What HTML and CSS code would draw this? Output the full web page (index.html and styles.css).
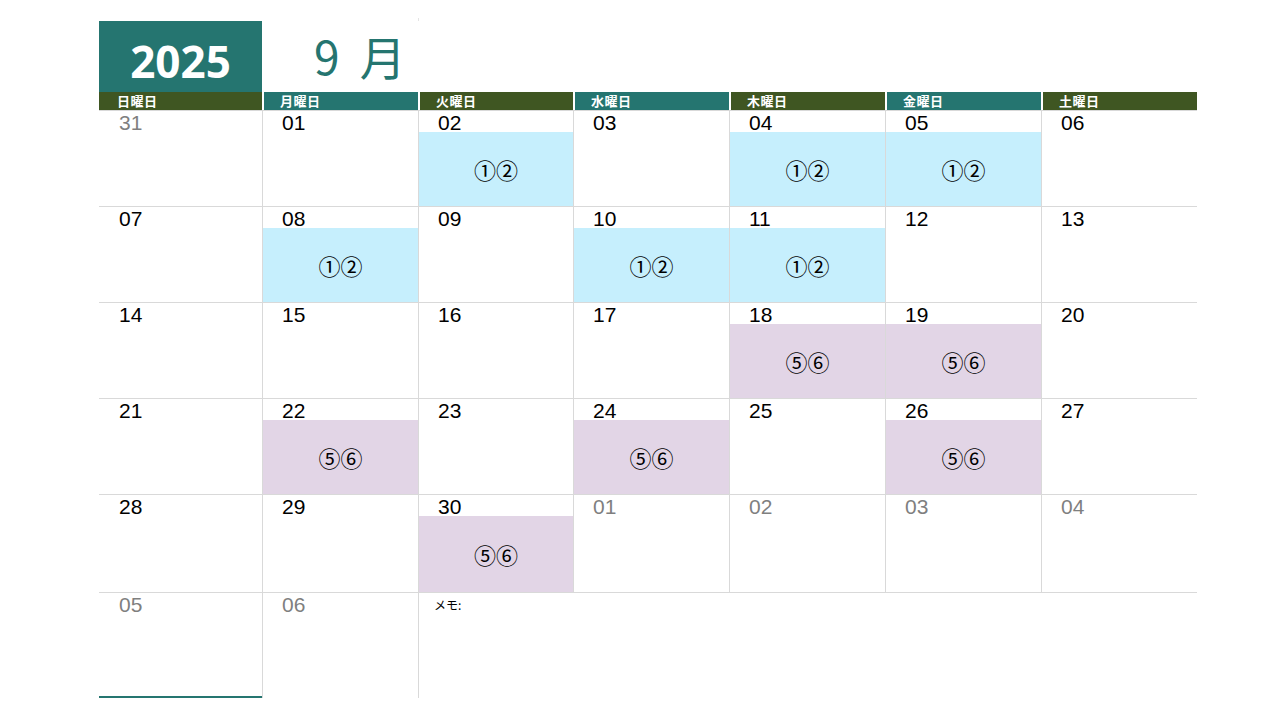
FILE: index.html
```html
<!DOCTYPE html>
<html lang="ja">
<head>
    <meta charset="UTF-8">
    <meta name="viewport" content="width=device-width, initial-scale=1.0">
    <title>2025年 9月 カレンダー</title>
    <link rel="stylesheet" href="styles.css">
</head>
<body>
    <div class="page">
        <!-- Year and month title -->
        <div class="title">
            <div class="year">2025</div>
            <div class="month">9 月</div>
            <div class="tick"></div>
        </div>

        <!-- Weekday header -->
        <div class="weekdays">
            <div class="wd olive">日曜日</div>
            <div class="wd teal">月曜日</div>
            <div class="wd olive">火曜日</div>
            <div class="wd teal">水曜日</div>
            <div class="wd olive">木曜日</div>
            <div class="wd teal">金曜日</div>
            <div class="wd olive">土曜日</div>
        </div>

        <!-- Days -->
        <div class="grid">
            <div class="day"><div class="num other">31</div><div class="ev"></div></div>
            <div class="day"><div class="num">01</div><div class="ev"></div></div>
            <div class="day"><div class="num">02</div><div class="ev blue">①②</div></div>
            <div class="day"><div class="num">03</div><div class="ev"></div></div>
            <div class="day"><div class="num">04</div><div class="ev blue">①②</div></div>
            <div class="day"><div class="num">05</div><div class="ev blue">①②</div></div>
            <div class="day"><div class="num">06</div><div class="ev"></div></div>

            <div class="day"><div class="num">07</div><div class="ev"></div></div>
            <div class="day"><div class="num">08</div><div class="ev blue">①②</div></div>
            <div class="day"><div class="num">09</div><div class="ev"></div></div>
            <div class="day"><div class="num">10</div><div class="ev blue">①②</div></div>
            <div class="day"><div class="num">11</div><div class="ev blue">①②</div></div>
            <div class="day"><div class="num">12</div><div class="ev"></div></div>
            <div class="day"><div class="num">13</div><div class="ev"></div></div>

            <div class="day"><div class="num">14</div><div class="ev"></div></div>
            <div class="day"><div class="num">15</div><div class="ev"></div></div>
            <div class="day"><div class="num">16</div><div class="ev"></div></div>
            <div class="day"><div class="num">17</div><div class="ev"></div></div>
            <div class="day"><div class="num">18</div><div class="ev lilac">⑤⑥</div></div>
            <div class="day"><div class="num">19</div><div class="ev lilac">⑤⑥</div></div>
            <div class="day"><div class="num">20</div><div class="ev"></div></div>

            <div class="day"><div class="num">21</div><div class="ev"></div></div>
            <div class="day"><div class="num">22</div><div class="ev lilac">⑤⑥</div></div>
            <div class="day"><div class="num">23</div><div class="ev"></div></div>
            <div class="day"><div class="num">24</div><div class="ev lilac">⑤⑥</div></div>
            <div class="day"><div class="num">25</div><div class="ev"></div></div>
            <div class="day"><div class="num">26</div><div class="ev lilac">⑤⑥</div></div>
            <div class="day"><div class="num">27</div><div class="ev"></div></div>

            <div class="day"><div class="num">28</div><div class="ev"></div></div>
            <div class="day"><div class="num">29</div><div class="ev"></div></div>
            <div class="day"><div class="num">30</div><div class="ev lilac">⑤⑥</div></div>
            <div class="day"><div class="num other">01</div><div class="ev"></div></div>
            <div class="day"><div class="num other">02</div><div class="ev"></div></div>
            <div class="day"><div class="num other">03</div><div class="ev"></div></div>
            <div class="day"><div class="num other">04</div><div class="ev"></div></div>

            <div class="day last"><div class="num other">05</div><div class="ev"></div></div>
            <div class="day"><div class="num other">06</div><div class="ev"></div></div>
            <div class="day memo">メモ:</div>
        </div>
    </div>
</body>
</html>
```

FILE: styles.css
```css
body {
    margin: 0;
    padding: 0;
    background: #fff;
    color: #000;
    font-family: "Open Sans", "Noto Sans CJK JP", sans-serif;
}
.page {
    width: 1098px;
    margin-left: 99px;
    padding-top: 21px;
}

/* Title */
.title {
    display: flex;
    height: 71px;
    position: relative;
}
.year {
    width: 163px;
    background: #257570;
    color: #fff;
    font-size: 44px;
    font-weight: bold;
    text-align: center;
    line-height: 44px;
    padding-top: 18px;
    box-sizing: border-box;
}
.month {
    padding-left: 52px;
    padding-top: 6px;
    color: #257570;
    font-family: "Noto Sans CJK JP", sans-serif;
    font-size: 46px;
    line-height: 56px;
    word-spacing: 10px;
}
.tick {
    position: absolute;
    left: 319px;
    top: -3px;
    width: 1px;
    height: 3px;
    background: #e4e4e4;
}

/* Weekday header */
.weekdays,
.grid {
    display: grid;
    grid-template-columns: 163px 156px 155px 156px 156px 156px 156px;
}
.wd {
    height: 18px;
    color: #fff;
    font-family: "Noto Sans CJK JP", sans-serif;
    font-size: 13px;
    font-weight: bold;
    letter-spacing: 0.5px;
    line-height: 18px;
    padding-left: 18px;
    box-sizing: border-box;
    overflow: hidden;
}
.wd + .wd {
    border-left: 2px solid #fff;
    padding-left: 16px;
}
.olive {
    background: #3f5622;
}
.teal {
    background: #257570;
}

/* Day cells */
.grid {
    grid-template-rows: 96px 96px 96px 96px 98px 106px;
}
.day {
    display: flex;
    flex-direction: column;
    border-top: 1px solid #d9d9d9;
    border-left: 1px solid #d9d9d9;
}
.day:nth-child(7n+1) {
    border-left: none;
}
.num {
    height: 21px;
    padding-left: 19px;
    font-family: "Liberation Sans", Arial, sans-serif;
    font-size: 21px;
    line-height: 24px;
    color: #000;
}
.day:nth-child(7n+1) .num {
    padding-left: 20px;
}
.num.other {
    color: #7f7f7f;
}
.ev {
    flex: 1;
    display: flex;
    align-items: center;
    justify-content: center;
    font-family: "Noto Sans CJK JP", sans-serif;
    font-size: 22px;
}
.blue {
    background: #c6effd;
}
.lilac {
    background: #e2d5e6;
}
.last {
    border-bottom: 2px solid #257570;
}
.memo {
    grid-column: span 5;
    padding-left: 15px;
    padding-top: 3px;
    font-family: "Noto Sans CJK JP", sans-serif;
    font-size: 12px;
    display: block;
}
```
